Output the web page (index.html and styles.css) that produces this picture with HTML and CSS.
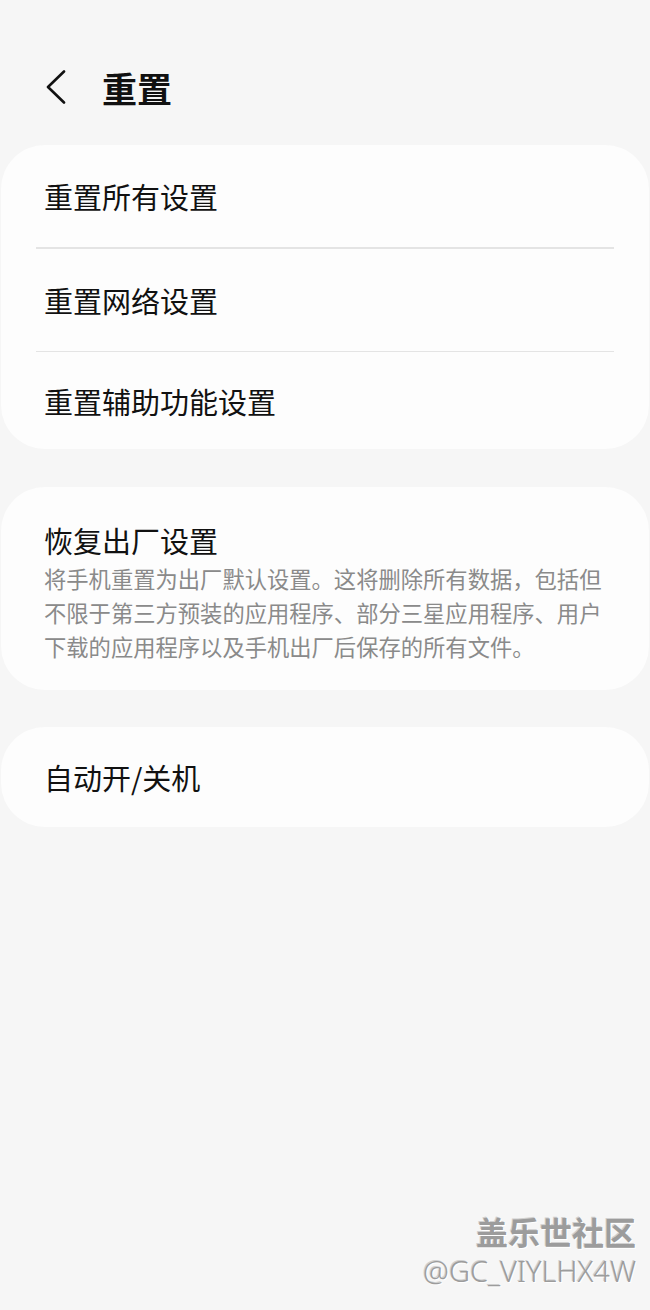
FILE: index.html
```html
<!DOCTYPE html>
<html lang="zh-CN">
<head>
    <meta charset="UTF-8">
    <meta name="viewport" content="width=device-width, initial-scale=1.0">
    <title>重置</title>
    <link rel="stylesheet" href="styles.css">
</head>
<body>
    <div class="page">
        <div class="header">
            <svg class="back" width="20" height="34" viewBox="0 0 20 34">
                <polyline points="18,1.5 2,17 18,32.5" fill="none" stroke="#111" stroke-width="2.6" stroke-linecap="round" stroke-linejoin="round"/>
            </svg>
            <h1 class="title">重置</h1>
        </div>

        <div class="card">
            <div class="row">重置所有设置</div>
            <div class="divider"></div>
            <div class="row">重置网络设置</div>
            <div class="divider"></div>
            <div class="row row-last">重置辅助功能设置</div>
        </div>

        <div class="card card-text">
            <div class="item-title">恢复出厂设置</div>
            <div class="item-desc">将手机重置为出厂默认设置。这将删除所有数据，包括但不限于第三方预装的应用程序、部分三星应用程序、用户下载的应用程序以及手机出厂后保存的所有文件。</div>
        </div>

        <div class="card">
            <div class="row row-single">自动开/关机</div>
        </div>

        <!-- watermark sits over the page -->
        <div class="watermark">
            <div class="wm-name">盖乐世社区</div>
            <div class="wm-user">@GC_VIYLHX4W</div>
        </div>
    </div>
</body>
</html>
```

FILE: styles.css
```css
body {
    margin: 0;
    background: #f6f6f6;
    font-family: "Noto Sans CJK SC", "Noto Sans", sans-serif;
    color: #111;
}
.page {
    position: relative;
    width: 650px;
    height: 1310px;
    overflow: hidden;
}
.header {
    display: flex;
    align-items: center;
    gap: 36px;
    height: 70px;
    padding: 52px 0 0 46px;
    margin-bottom: 23px;
}
.back {
    display: block;
}
.title {
    margin: 0;
    font-size: 35px;
    font-weight: 700;
    line-height: 1;
    color: #111;
}
.card {
    background: #fdfdfd;
    border-radius: 44px;
    margin: 0 1px 38px;
}
.row {
    display: flex;
    align-items: center;
    height: 102px;
    padding-left: 43px;
    font-size: 29px;
}
.row-last {
    height: 97px;
}
.row-single {
    height: 100px;
}
.divider {
    height: 1.5px;
    background: #e4e4e4;
    margin: 0 35px;
}
.card-text {
    padding: 35px 44px 27px 43px;
    margin-bottom: 37px;
}
.item-title {
    font-size: 29px;
    line-height: 36px;
}
.item-desc {
    margin-top: 3px;
    font-size: 22.3px;
    line-height: 34px;
    color: #8a8a8a;
}
.watermark {
    position: absolute;
    right: 14px;
    top: 1210px;
    text-align: right;
    color: #9c9c9c;
    text-shadow: 1px 1px 0 #ffffff, -1px -1px 0 #d0d0d0;
}
.wm-name {
    font-size: 32px;
    font-weight: 700;
    line-height: 42px;
}
.wm-user {
    font-family: "Noto Sans", sans-serif;
    font-size: 29px;
    font-weight: 300;
    line-height: 38px;
}
```
